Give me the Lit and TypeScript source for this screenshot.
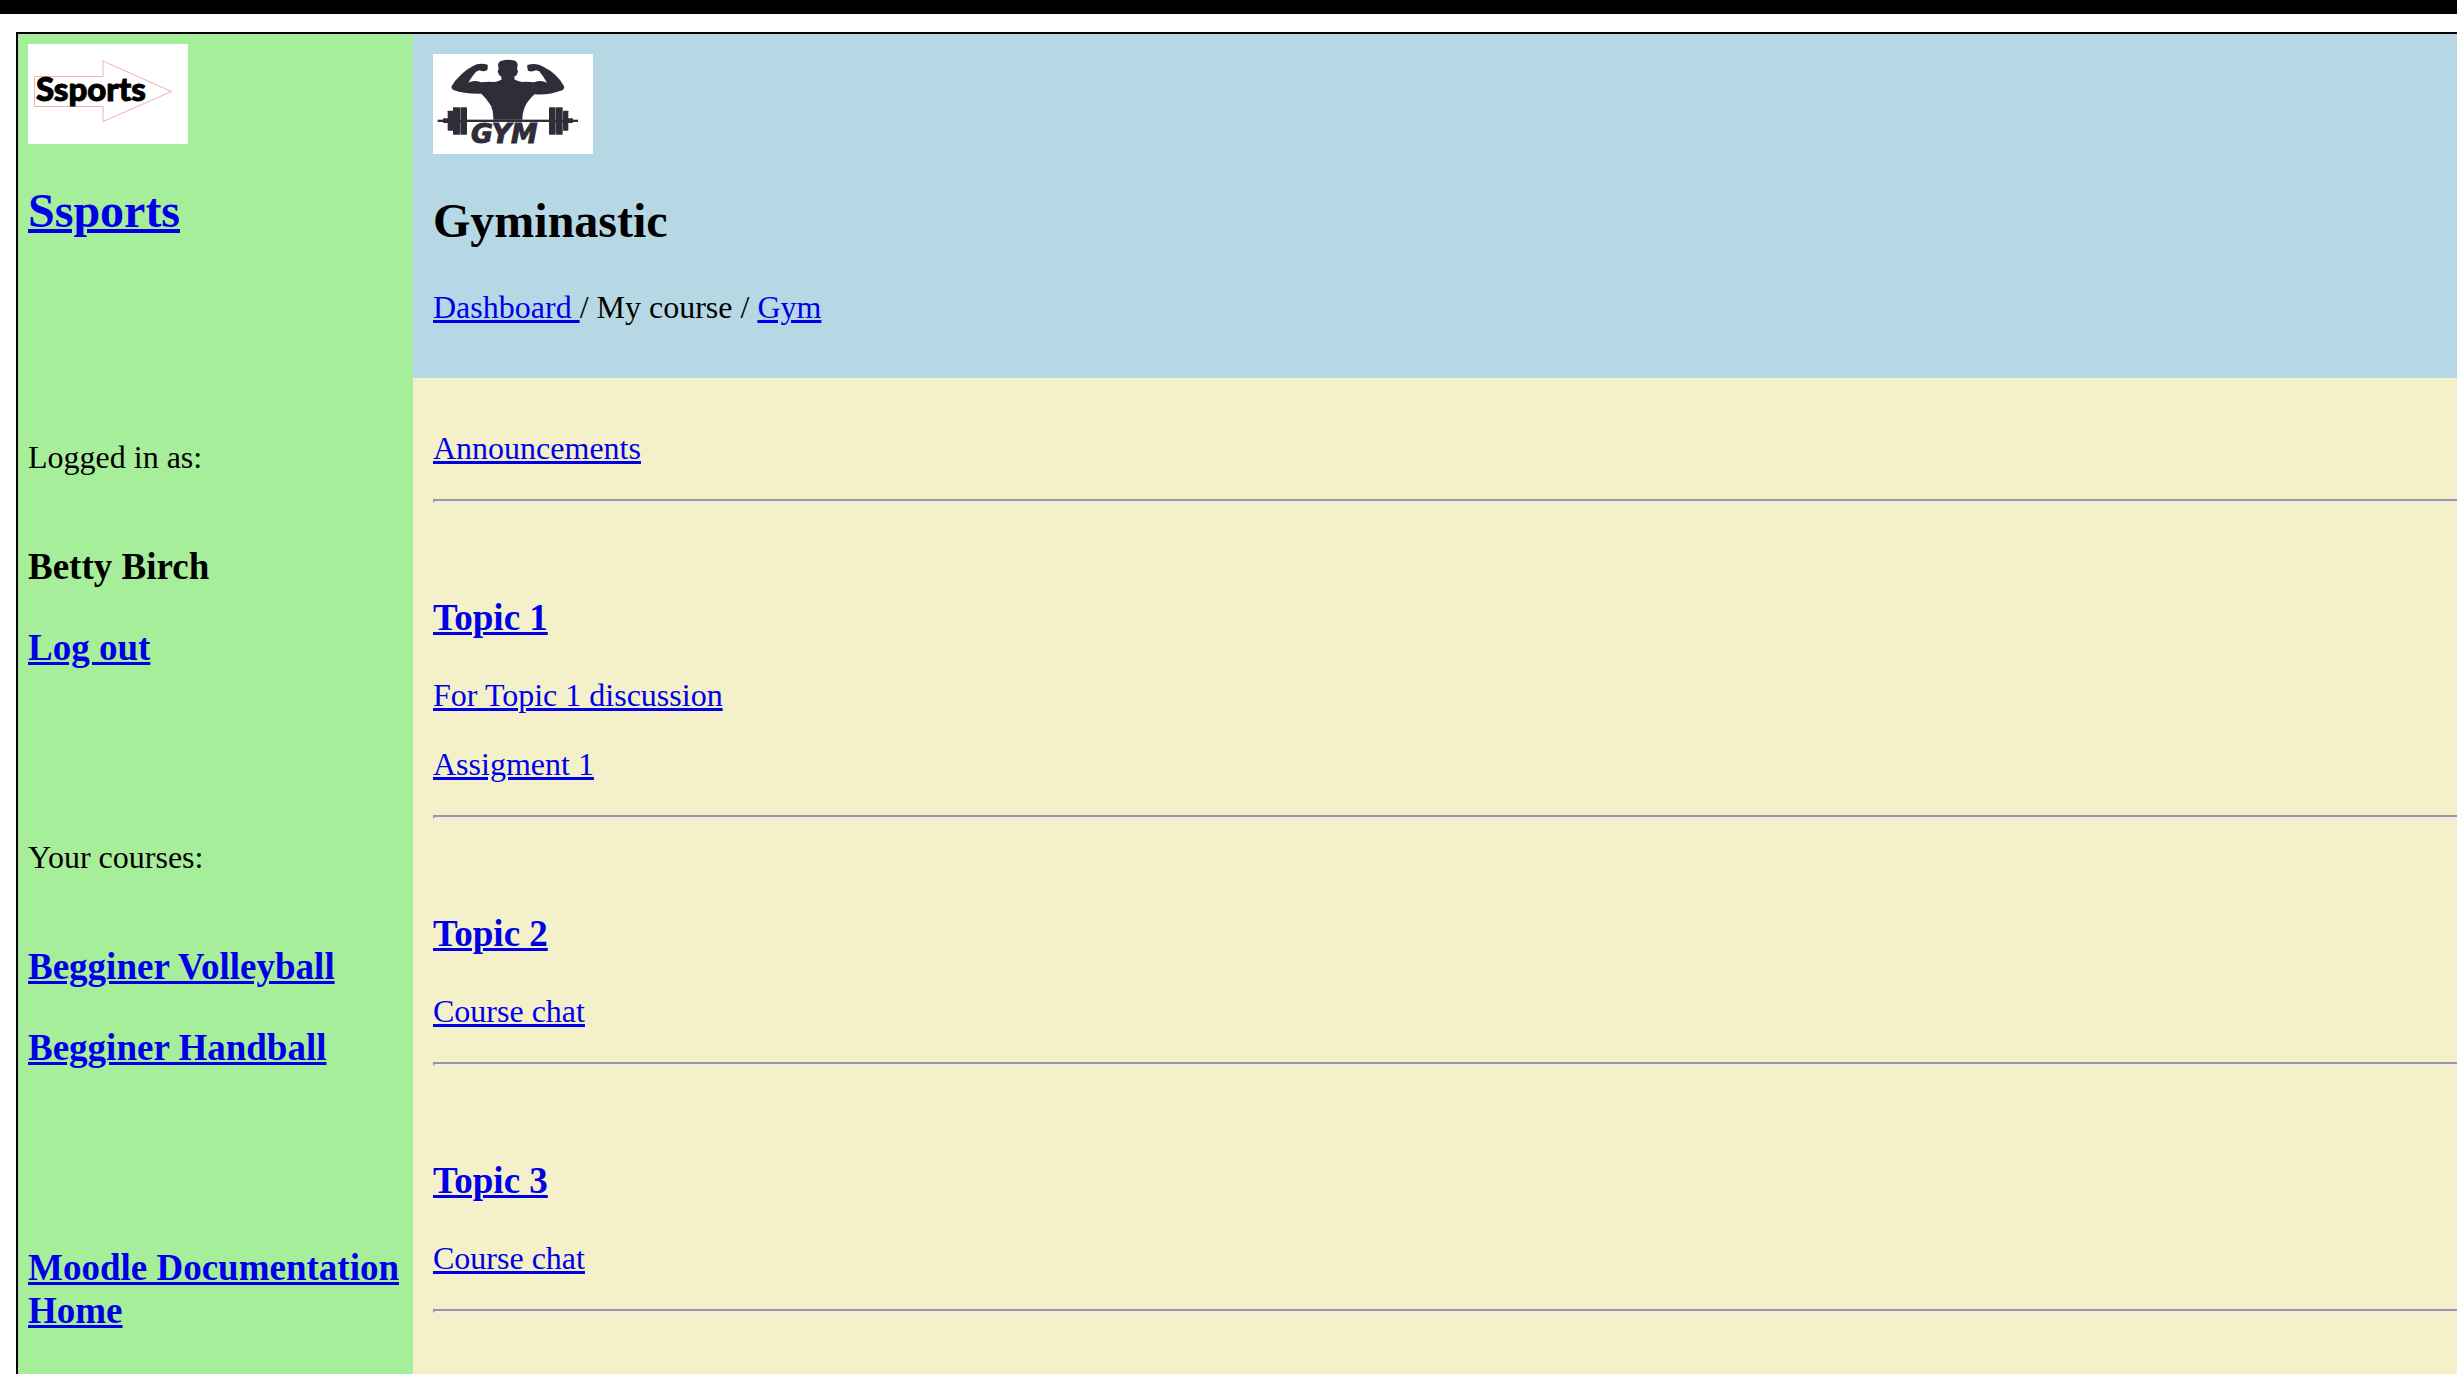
import { LitElement, html, css, svg } from "lit";
import { customElement } from "lit/decorators.js";

interface Topic {
  title: string;
  items: string[];
}

const TOPICS: Topic[] = [
  { title: "Topic 1", items: ["For Topic 1 discussion", "Assigment 1"] },
  { title: "Topic 2", items: ["Course chat"] },
  { title: "Topic 3", items: ["Course chat"] },
];

const COURSES = ["Begginer Volleyball", "Begginer Handball"];

/* Weight plates: x, y, width, height in the gym logo's view box. */
const PLATES = [
  [30, 193, 16, 14], [44, 170, 17, 60], [60, 160, 21, 82], [82, 160, 20, 82],
  [348, 160, 20, 82], [369, 160, 20, 82], [390, 170, 16, 60], [404, 193, 16, 14],
];

@customElement("app-root")
export class AppRoot extends LitElement {
  static styles = css`
    :host {
      display: flex;
      flex-direction: column;
      min-height: 100vh;
      background: #fff;
      color: #000;
      font-family: "Liberation Serif", "Times New Roman", serif;
      font-size: 32px;
      line-height: 36px;
    }
    * {
      box-sizing: border-box;
    }
    .strip {
      height: 14px;
      background: #000;
    }
    .frame {
      flex: 1;
      display: grid;
      grid-template-columns: 395px 1fr;
      margin: 18px 0 0 16px;
      border-top: 2px solid #000;
      border-left: 2px solid #000;
    }
    .side {
      padding: 10px;
      background: #a7ee9a;
    }
    .main {
      display: flex;
      flex-direction: column;
      background: #f3f0ca;
    }
    .banner {
      padding: 20px 20px 53px;
      background: #b6d8e4;
    }
    .content {
      padding: 52px 0 20px 20px;
    }
    .logo {
      display: block;
      width: 160px;
      height: 100px;
      background: #fff;
    }
    .word {
      font-family: Lato, sans-serif;
      font-weight: 900;
      font-size: 33px;
      stroke: #000;
      stroke-width: 1px;
    }
    .gym {
      font-family: "DejaVu Sans", sans-serif;
      font-weight: 700;
      font-style: italic;
      font-size: 80px;
      stroke: #2e2d38;
      stroke-width: 3px;
    }
    h1,
    h2,
    h3,
    p {
      margin: 0;
    }
    h1,
    h2 {
      margin: 39px 0 40px;
      font-size: 48px;
      line-height: 56px;
    }
    h3 {
      font-size: 37px;
      line-height: 43px;
    }
    a {
      color: #0000e8;
      text-decoration-thickness: 3px;
      text-underline-offset: 2px;
    }
    h1 a {
      text-decoration-thickness: 4px;
    }
    .group {
      display: flex;
      flex-direction: column;
      gap: 38px;
    }
    .label {
      margin-bottom: 32px;
    }
    .user {
      margin-top: 200px;
    }
    .courses {
      margin-top: 170px;
    }
    .docs {
      margin-top: 177px;
    }
    .topic {
      padding-top: 93px;
    }
    .topic h3 {
      margin-bottom: 38px;
    }
    .item {
      margin-bottom: 33px;
    }
    hr {
      height: 4px;
      margin: 0;
      border: 2px solid;
      border-color: #999 #ededed #ededed #999;
      border-right: 0;
    }
  `;

  private sportsLogo() {
    return html`<svg class="logo" viewBox="0 0 160 100" role="img" aria-label="Ssports logo">
      <path d="M6.5 32.5H75V17L143.5 47.5L75 77.5V62.5H6.5Z" fill="none" stroke="#f0b0b0" stroke-width="1" />
      <text class="word" x="8" y="57">Ssports</text>
    </svg>`;
  }

  private gymLogo() {
    return html`<svg class="logo" viewBox="0 0 480 300" role="img" aria-label="Gym logo" fill="#2e2d38">
      <path
        d="M131 31Q148 27 164 32Q165 45 162 49Q152 55 139 49L129 53Q114 70 106 86Q122 77 144 85Q165 82 181 84Q199 83 206 76L204 66Q198 68 194 50L197 46L195 32Q197 22 206 20Q226 15 246 20Q254 24 254 32L252 46L255 50Q252 68 245 66L244 76Q253 83 268 84Q285 82 303 85Q325 77 342 86Q332 69 319 52L309 49Q296 55 285 50Q282 40 283 33Q300 27 318 32L331 38Q352 48 367 63Q383 77 394 98Q393 106 388 109Q348 124 305 121Q283 140 274 162Q268 178 268 197H181Q182 172 174 155Q162 135 145 119Q98 121 61 108Q55 104 55 98Q66 78 81 65Q105 42 131 31Z"
      />
      <rect x="14" y="197" width="421" height="7" />
      ${PLATES.map(([x, y, w, h]) => svg`<rect x=${x} y=${y} width=${w} height=${h} rx="2" />`)}
      <text class="gym" x="114" y="267">GYM</text>
    </svg>`;
  }

  render() {
    return html`
      <div class="strip"></div>
      <div class="frame">
        <aside class="side">
          ${this.sportsLogo()}
          <h1><a href="#home">Ssports</a></h1>
          <section class="group user">
            <p class="label">Logged in as:</p>
            <h3>Betty Birch</h3>
            <h3><a href="#logout">Log out</a></h3>
          </section>
          <nav class="group courses">
            <p class="label">Your courses:</p>
            ${COURSES.map((name) => html`<h3><a href="#course">${name}</a></h3>`)}
          </nav>
          <h3 class="docs">
            <a href="#docs">Moodle Documentation</a><br />
            <a href="#home">Home</a>
          </h3>
        </aside>
        <main class="main">
          <header class="banner">
            ${this.gymLogo()}
            <h2>Gyminastic</h2>
            <p><a href="#dashboard">Dashboard </a>/ My course / <a href="#gym">Gym</a></p>
          </header>
          <div class="content">
            <p class="item"><a href="#announcements">Announcements</a></p>
            <hr />
            ${TOPICS.map(
              (topic) => html`<section class="topic">
                <h3><a href="#topic">${topic.title}</a></h3>
                ${topic.items.map((item) => html`<p class="item"><a href="#item">${item}</a></p>`)}
                <hr />
              </section>`,
            )}
          </div>
        </main>
      </div>
    `;
  }
}
